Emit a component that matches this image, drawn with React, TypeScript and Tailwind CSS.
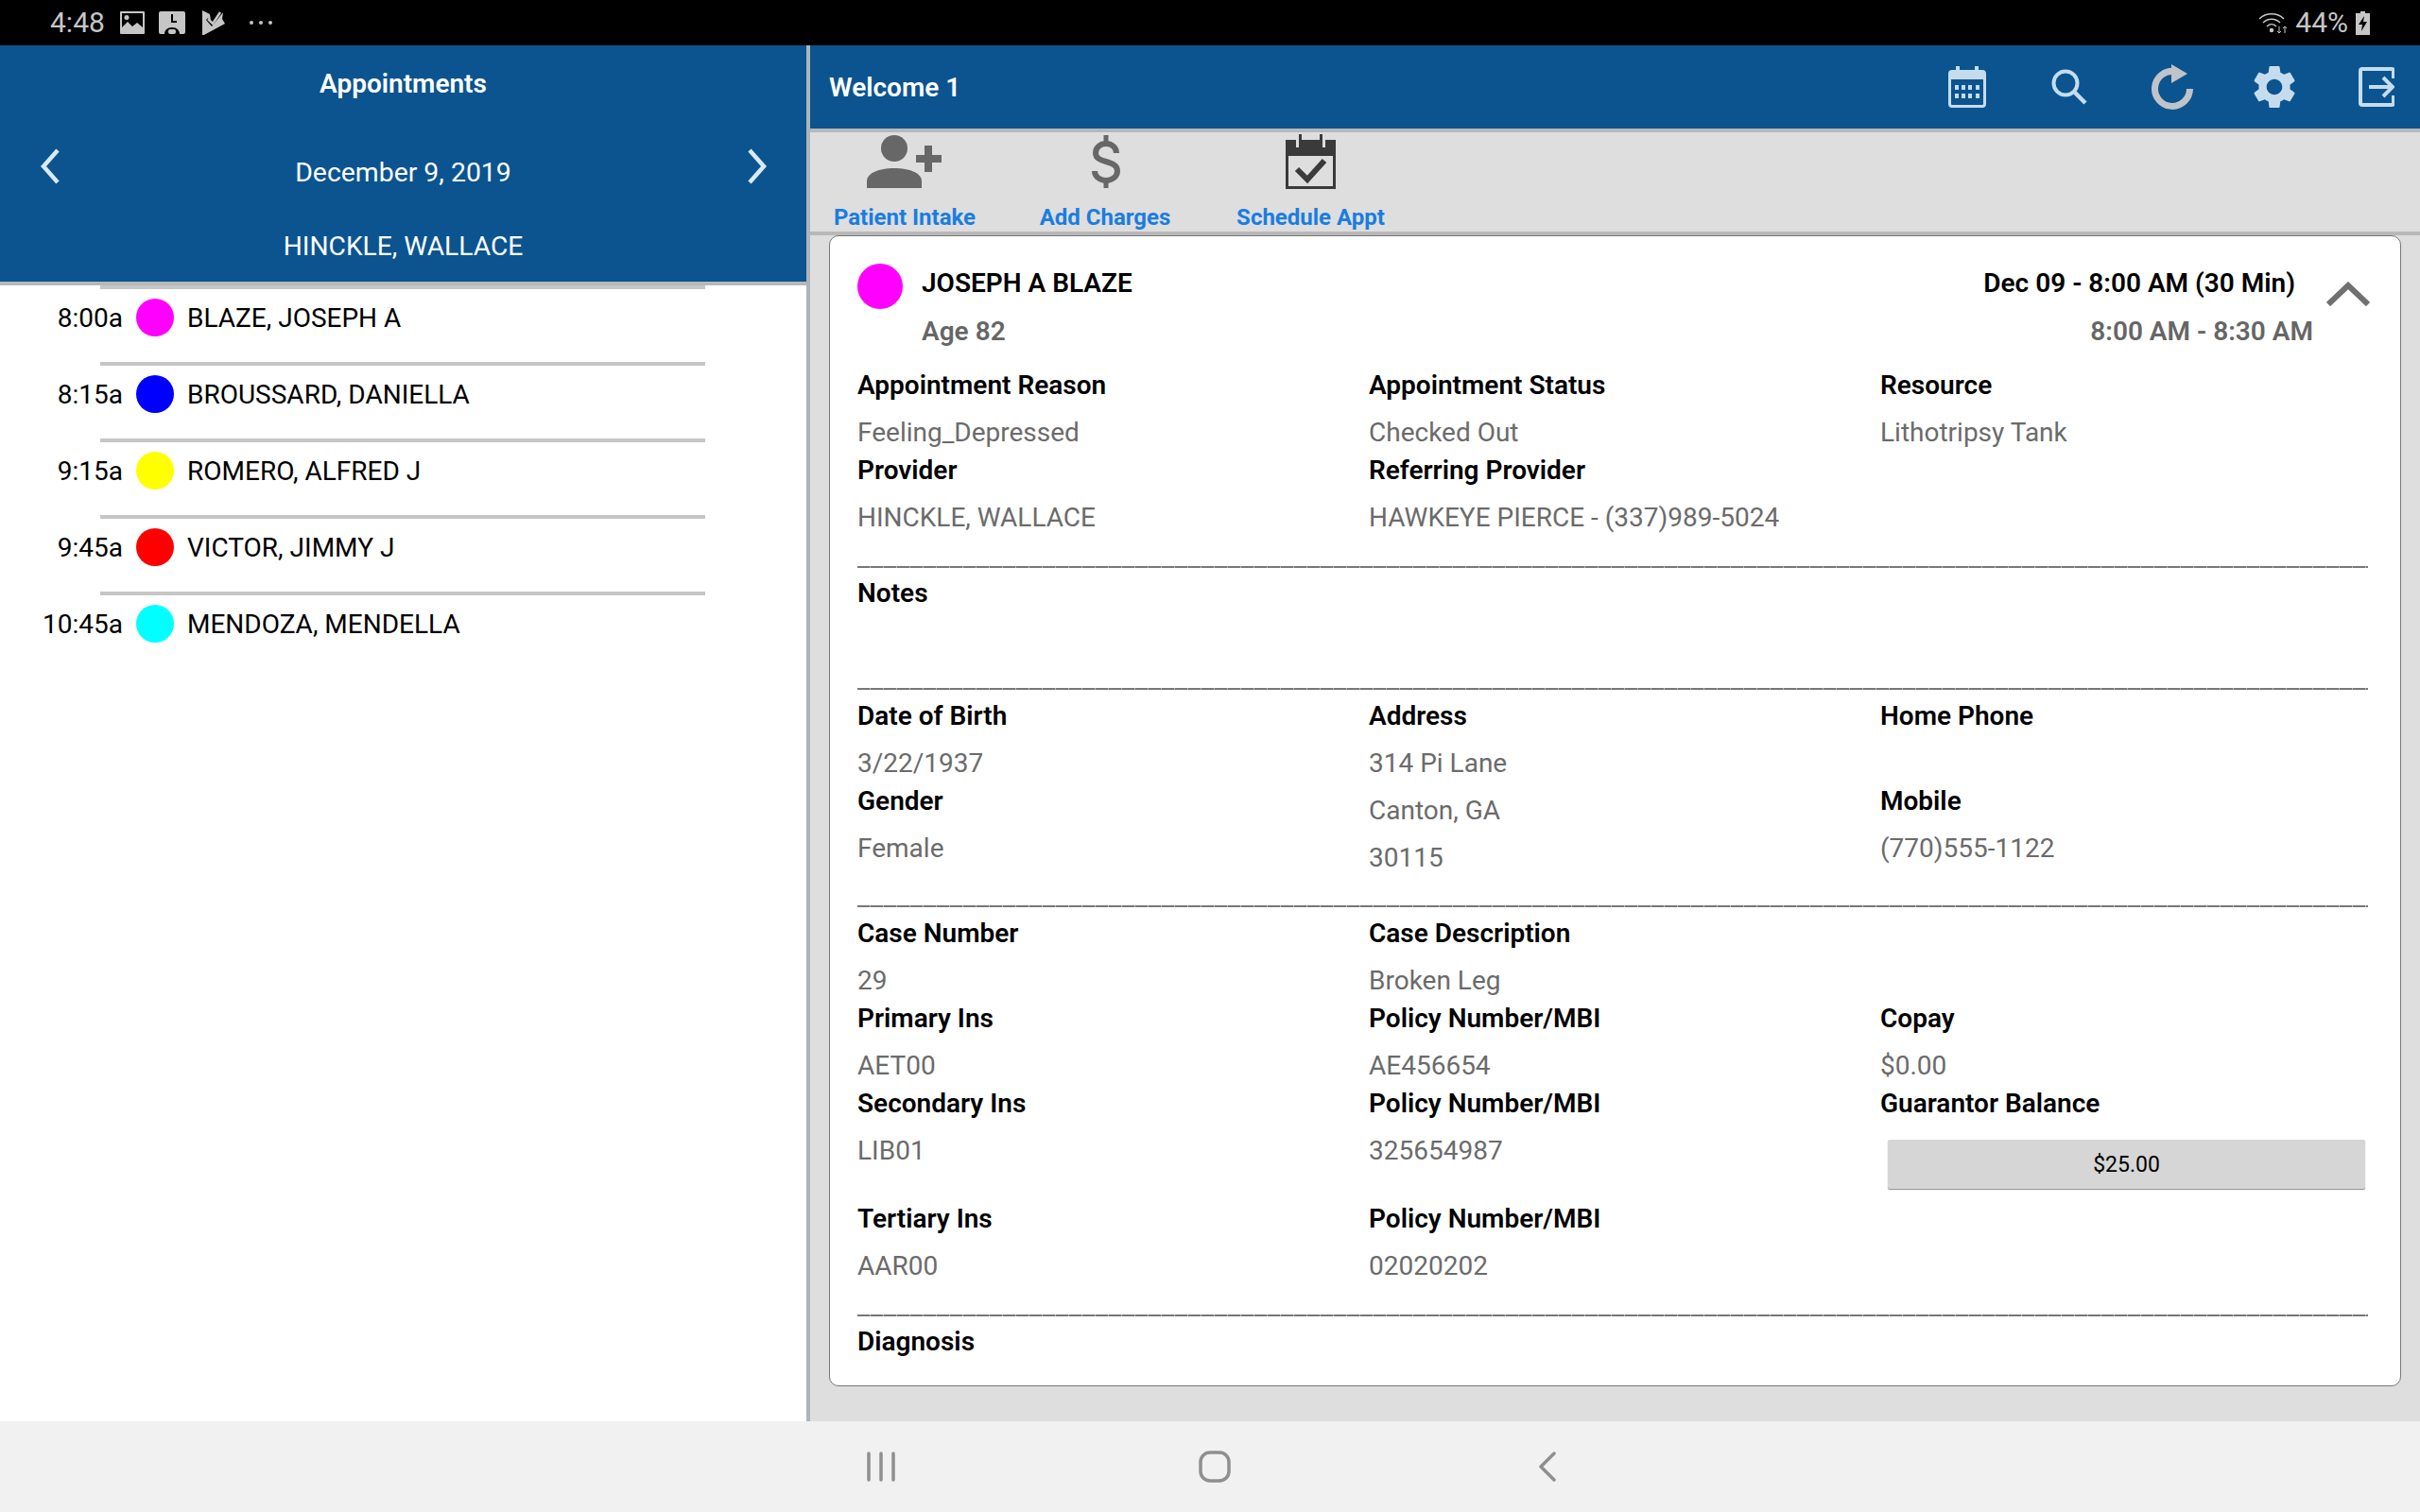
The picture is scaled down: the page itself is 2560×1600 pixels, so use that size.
import type { ReactNode } from "react";

const appointments = [
  { time: "8:00a", color: "bg-[#ff00ff]", name: "BLAZE, JOSEPH A" },
  { time: "8:15a", color: "bg-[#0000ff]", name: "BROUSSARD, DANIELLA" },
  { time: "9:15a", color: "bg-[#ffff00]", name: "ROMERO, ALFRED J" },
  { time: "9:45a", color: "bg-[#ff0000]", name: "VICTOR, JIMMY J" },
  { time: "10:45a", color: "bg-[#00ffff]", name: "MENDOZA, MENDELLA" },
];

function StatusBar() {
  return (
    <div className="flex h-[48px] shrink-0 items-center bg-black pl-[53px] pr-[53px] text-[#c6c6c6]">
      <span className="w-[74px] text-[30px] leading-none">4:48</span>
      <svg className="h-[24px] w-[26px]" viewBox="0 0 26 24">
        <path fill="#c6c6c6" fillRule="evenodd" d="M1 0h24a1 1 0 0 1 1 1v22a1 1 0 0 1-1 1H1a1 1 0 0 1-1-1V1a1 1 0 0 1 1-1zm1 2v15l6-6 5 5 5-4 6 5V2H2zm5 2a2.500 2.500 0 1 1 0 5 2.500 2.500 0 0 1 0-5z" />
      </svg>
      <svg className="ml-[15px] h-[24px] w-[28px]" viewBox="0 0 28 24">
        <path fill="#c6c6c6" fillRule="evenodd" d="M2 0h24a2 2 0 0 1 2 2v20a2 2 0 0 1-2 2h-4c0-4-3-7-8-7s-8 3-8 7H2a2 2 0 0 1-2-2V2a2 2 0 0 1 2-2zm11 3v9h6v-2h-4V3h-2zm-3 18a2 2 0 0 1 2-2h4a2 2 0 0 1 2 2v1a2 2 0 0 1-2 2h-4a2 2 0 0 1-2-2v-1z" />
      </svg>
      <svg className="ml-[18px] h-[26px] w-[24px]" viewBox="0 0 24 26">
        <path fill="#c6c6c6" d="M0 0l8 4 1 7-3-3-2 2 6 7 12-15-1 7 3 5-24 13z" />
        <path fill="none" stroke="#c6c6c6" strokeWidth="2.500" d="M6 9l5 5 8-12" />
      </svg>
      <span className="ml-[26px] flex w-[24px] justify-between">
        <i className="block h-[4px] w-[4px] rounded-full bg-[#c6c6c6]" />
        <i className="block h-[4px] w-[4px] rounded-full bg-[#c6c6c6]" />
        <i className="block h-[4px] w-[4px] rounded-full bg-[#c6c6c6]" />
      </span>
      <div className="ml-auto flex items-center">
        <svg className="h-[24px] w-[31px]" viewBox="0 0 31 24" fill="none" stroke="#c6c6c6" strokeWidth="1.500">
          <path d="M1 8c7-7 19-7 26 0" />
          <path d="M5 12c5-5 13-5 18 0" />
          <path d="M9 16c3-3 7-3 10 0" />
          <circle cx="14" cy="20" r="1.500" fill="#c6c6c6" />
          <path d="M22 16v7M20 21l2 2 2-2M28 23v-7M26 18l2-2 2 2" strokeWidth="1" />
        </svg>
        <span className="ml-[8px] text-[30px] leading-none">44%</span>
        <svg className="ml-[8px] h-[25px] w-[15px]" viewBox="0 0 15 25">
          <path fill="#c6c6c6" d="M5 0h5v2h5v23H0V2h5z" />
          <path fill="#000" d="M9 5L3 14h4l-1 7 6-10H8z" />
        </svg>
      </div>
    </div>
  );
}

function Sidebar() {
  return (
    <div className="flex w-[853px] shrink-0 flex-col bg-white">
      <div className="relative flex h-[250px] shrink-0 flex-col items-center bg-[#0b548f] text-white">
        <div className="mt-[21px] text-[28px] font-semibold leading-[40px]">Appointments</div>
        <div className="mt-[54px] text-[28.4px] leading-[40px]">December 9, 2019</div>
        <div className="mt-[38px] text-[28.2px] leading-[40px]">HINCKLE, WALLACE</div>
        <svg className="absolute left-[42px] top-[109px] h-[38px] w-[22px]" viewBox="0 0 22 38" fill="none" stroke="#dbe9f4" strokeWidth="4.500">
          <path d="M19 2L4 19l15 17" />
        </svg>
        <svg className="absolute left-[790px] top-[109px] h-[38px] w-[22px]" viewBox="0 0 22 38" fill="none" stroke="#dbe9f4" strokeWidth="4.500">
          <path d="M3 2l15 17L3 36" />
        </svg>
      </div>
      <div className="h-[4px] shrink-0 bg-[#b8b8b8]" />
      {appointments.map((a) => (
        <div key={a.name} className="flex h-[81px] shrink-0 flex-col">
          <div className="ml-[106px] h-[4px] w-[640px] shrink-0 bg-[#c6c6c6]" />
          <div className="flex h-[60px] items-center">
            <span className="w-[130px] pt-[2px] text-right text-[28px] leading-none text-black">{a.time}</span>
            <span className={`ml-[14px] h-[40px] w-[40px] rounded-full ${a.color}`} />
            <span className="ml-[14px] pt-[2px] text-[28px] leading-none text-black">{a.name}</span>
          </div>
        </div>
      ))}
    </div>
  );
}

function TopBar() {
  return (
    <div className="flex h-[88px] shrink-0 items-center bg-[#0b548f]">
      <span className="ml-[20px] pt-[2px] text-[28px] font-semibold text-white">Welcome 1</span>
      <div className="ml-auto mr-[27px] flex items-center">
        <svg className="h-[44px] w-[40px]" viewBox="0 0 40 44">
          <path fill="#c5dcee" fillRule="evenodd" d="M8 0h4v4h16V0h4v4h4a4 4 0 0 1 4 4v32a4 4 0 0 1-4 4H4a4 4 0 0 1-4-4V8a4 4 0 0 1 4-4h4V0zM3 14v26a1 1 0 0 0 1 1h32a1 1 0 0 0 1-1V14H3z" />
          {[7, 14, 21, 29].map((x) => (
            <g key={x} fill="#c5dcee">
              <rect x={x} y="20" width="4" height="5" />
              <rect x={x} y="29" width="4" height="5" />
            </g>
          ))}
        </svg>
        <svg className="ml-[69px] h-[38px] w-[38px]" viewBox="0 0 38 38" fill="none" stroke="#c5dcee" strokeWidth="4">
          <circle cx="15" cy="15" r="12.500" />
          <path d="M24 24l12 12" strokeWidth="4.500" />
        </svg>
        <svg className="ml-[68px] h-[48px] w-[44px]" viewBox="0 0 44 48" fill="none">
          <path d="M24 7.500A18.500 18.500 0 1 0 40.500 26" stroke="#c0c4c8" strokeWidth="7" />
          <path d="M21 0l17 10-17 10z" fill="#c0c4c8" />
        </svg>
        <svg className="ml-[63px] h-[46px] w-[46px]" viewBox="2 2 20 20">
          <path fill="#c5dcee" d="M19.140 12.940c.04-.3.06-.61.06-.94 0-.32-.02-.64-.07-.94l2.030-1.580c.18-.14.23-.41.12-.61l-1.920-3.320c-.12-.22-.37-.29-.59-.22l-2.390.96c-.5-.38-1.030-.7-1.620-.94l-.36-2.540c-.04-.24-.24-.41-.48-.41h-3.840c-.24 0-.43.17-.47.41l-.36 2.540c-.59.24-1.130.57-1.620.94l-2.390-.96c-.22-.08-.47 0-.59.22L2.740 8.870c-.12.21-.08.47.12.61l2.030 1.580c-.05.3-.09.63-.09.94s.02.64.07.94l-2.030 1.580c-.18.14-.23.41-.12.61l1.920 3.320c.12.22.37.29.59.22l2.390-.96c.5.38 1.030.7 1.620.94l.36 2.540c.05.24.24.41.48.41h3.840c.24 0 .44-.17.47-.41l.36-2.540c.59-.24 1.130-.56 1.620-.94l2.390.96c.22.08.47 0 .59-.22l1.920-3.320c.12-.22.07-.47-.12-.61l-2.010-1.580zM12 15.600c-1.980 0-3.600-1.620-3.600-3.600s1.620-3.600 3.600-3.600 3.600 1.620 3.600 3.600-1.620 3.600-3.600 3.600z" />
        </svg>
        <svg className="ml-[66px] h-[42px] w-[38px]" viewBox="0 0 38 42" fill="none" stroke="#c5dcee" strokeWidth="4">
          <path d="M37 12V4a2 2 0 0 0-2-2H4a2 2 0 0 0-2 2v34a2 2 0 0 0 2 2h31a2 2 0 0 0 2-2v-8" />
          <path d="M11 21h24M26 11l10 10-10 10" />
        </svg>
      </div>
    </div>
  );
}

function ToolButton({ icon, label, width }: { icon: ReactNode; label: string; width: string }) {
  return (
    <div className={`flex flex-col items-center ${width}`}>
      <div className="flex h-[62px] items-center">{icon}</div>
      <span className="mt-[13px] whitespace-nowrap text-[24px] font-bold leading-[30px] text-[#1a7de0]">{label}</span>
    </div>
  );
}

function Toolbar() {
  return (
    <div className="flex h-[105px] shrink-0 items-start pl-[25px]">
      <ToolButton
        label="Patient Intake"
        width="w-[150px]"
        icon={
          <svg className="h-[56px] w-[80px]" viewBox="0 0 80 56">
            <ellipse cx="29" cy="14" rx="14" ry="14" fill="#676767" />
            <path d="M0 56V49c0-9 13-14 29-14s29 5 29 14v7z" fill="#676767" />
            <path d="M52 21h9V11h8v10h10v8H69v10h-8V29h-9z" fill="#676767" />
          </svg>
        }
      />
      <ToolButton
        label="Add Charges"
        width="ml-[67px] w-[140px]"
        icon={
          <svg className="ml-[2px] h-[56px] w-[30px]" viewBox="0 0 30 56" fill="none" stroke="#676767" strokeWidth="6">
            <path d="M15 0v9M15 47v9" strokeWidth="5" />
            <path d="M26 19c0-6-5-10-11-10S4 13 4 19c0 5 4 7 11 9s12 4 12 10-6 10-12 10S3 44 3 38" />
          </svg>
        }
      />
      <ToolButton
        label="Schedule Appt"
        width="ml-[69px] w-[157px]"
        icon={
          <svg className="h-[58px] w-[53px]" viewBox="0 0 53 58">
            <path fill="#3a3a3a" fillRule="evenodd" d="M0 6h11v8h3V0h3v6h19V0h3v14h3V6h11v52H0V6zm3 17v32h47V23H3z" />
            <path fill="none" stroke="#3a3a3a" strokeWidth="6" d="M12 37l11 11 18-20" />
          </svg>
        }
      />
    </div>
  );
}

function Label({ children }: { children: ReactNode }) {
  return <div className="h-[40px] text-[28px] font-semibold leading-[42px] text-black">{children}</div>;
}

function Value({ children }: { children?: ReactNode }) {
  return <div className="h-[50px] pt-[11px] text-[28px] leading-[40px] text-[#6b6b6b]">{children}</div>;
}

function Field({ label, values, className }: { label: string; values: string[]; className?: string }) {
  return (
    <div className={className}>
      <Label>{label}</Label>
      {values.map((v) => (
        <Value key={v}>{v}</Value>
      ))}
    </div>
  );
}

function Rule() {
  return <div className="h-[2px] w-full bg-[repeating-linear-gradient(90deg,#777_0_13px,#b4b4b4_13px_14px)]" />;
}

function DetailCard() {
  return (
    <div className="mx-[20px] mb-[37px] flex h-[1218px] flex-col rounded-[10px] border border-[#777] bg-white pl-[29px] pr-[34px]">
      <div className="flex h-[137px] shrink-0 items-start justify-between">
        <div className="flex pt-[29px]">
          <span className="h-[48px] w-[48px] rounded-full bg-[#ff00ff]" />
          <div className="ml-[20px] flex flex-col pt-[1px]">
            <span className="text-[28px] font-semibold leading-[40px] text-black">JOSEPH A BLAZE</span>
            <span className="mt-[11px] text-[28px] font-semibold leading-[40px] text-[#666]">Age 82</span>
          </div>
        </div>
        <div className="relative flex flex-col items-end pr-[58px] pt-[30px]">
          <span className="mr-[19px] text-[28px] font-semibold leading-[40px] text-black">Dec 09 - 8:00 AM (30 Min)</span>
          <span className="mt-[11px] text-[28px] font-semibold leading-[40px] text-[#666]">8:00 AM - 8:30 AM</span>
          <svg className="absolute right-[-2px] top-[48px] h-[26px] w-[46px]" viewBox="0 0 46 26" fill="none" stroke="#707070" strokeWidth="6">
            <path d="M2 24L23 4l21 20" />
          </svg>
        </div>
      </div>

      <div className="grid shrink-0 grid-cols-[541px_541px_1fr] grid-rows-[90px_90px]">
        <Field label="Appointment Reason" values={["Feeling_Depressed"]} />
        <Field label="Appointment Status" values={["Checked Out"]} />
        <Field label="Resource" values={["Lithotripsy Tank"]} />
        <Field label="Provider" values={["HINCKLE, WALLACE"]} />
        <Field label="Referring Provider" values={["HAWKEYE PIERCE - (337)989-5024"]} />
      </div>

      <div className="mt-[32px] shrink-0"><Rule /></div>
      <div className="mt-[6px] h-[120px] shrink-0"><Label>Notes</Label></div>
      <div className="mt-[1px]"><Rule /></div>

      <div className="mt-[7px] grid shrink-0 grid-cols-[541px_541px_1fr] grid-rows-[90px_90px]">
        <Field label="Date of Birth" values={["3/22/1937"]} />
        <Field label="Address" values={["314 Pi Lane", "Canton, GA", "30115"]} className="row-span-2" />
        <Field label="Home Phone" values={[]} />
        <Field label="Gender" values={["Female"]} />
        <Field label="Mobile" values={["(770)555-1122"]} />
      </div>

      <div className="mt-[41px] shrink-0"><Rule /></div>

      <div className="mt-[7px] grid shrink-0 grid-cols-[541px_541px_1fr] grid-rows-[90px_90px_122px_90px]">
        <Field label="Case Number" values={["29"]} />
        <Field label="Case Description" values={["Broken Leg"]} className="col-span-2" />
        <Field label="Primary Ins" values={["AET00"]} />
        <Field label="Policy Number/MBI" values={["AE456654"]} />
        <Field label="Copay" values={["$0.00"]} />
        <Field label="Secondary Ins" values={["LIB01"]} />
        <Field label="Policy Number/MBI" values={["325654987"]} />
        <div>
          <Label>Guarantor Balance</Label>
          <button className="ml-[8px] mt-[19px] flex h-[52px] w-[505px] items-center justify-center rounded-[2px] bg-[#d6d6d6] pt-[2px] text-[23px] text-black shadow-[0_1px_1px_#8a8a8a]">
            $25.00
          </button>
        </div>
        <Field label="Tertiary Ins" values={["AAR00"]} />
        <Field label="Policy Number/MBI" values={["02020202"]} />
      </div>

      <div className="mt-[32px] shrink-0"><Rule /></div>
      <div className="mt-[6px]"><Label>Diagnosis</Label></div>
    </div>
  );
}

function NavBar() {
  return (
    <div className="flex h-[96px] shrink-0 items-center bg-[#f1f1f1]">
      <svg className="ml-[917px] h-[32px] w-[30px]" viewBox="0 0 30 32" fill="none" stroke="#8f8f8f" strokeWidth="3.500" strokeLinecap="round">
        <path d="M2 2v28M15 2v28M28 2v28" />
      </svg>
      <svg className="ml-[321px] h-[34px] w-[34px]" viewBox="0 0 34 34" fill="none" stroke="#8f8f8f" strokeWidth="3.500">
        <rect x="2" y="2" width="30" height="30" rx="10" />
      </svg>
      <svg className="ml-[325px] h-[32px] w-[20px]" viewBox="0 0 20 32" fill="none" stroke="#8f8f8f" strokeWidth="3.500" strokeLinecap="round" strokeLinejoin="round">
        <path d="M17 2L3 16l14 14" />
      </svg>
    </div>
  );
}

export default function App() {
  return (
    <div className="flex h-[1600px] w-[2560px] flex-col overflow-hidden font-['Roboto',sans-serif]">
      <StatusBar />
      <div className="flex min-h-0 flex-1">
        <Sidebar />
        <div className="w-[4px] shrink-0 bg-[#aeb4ba]" />
        <div className="flex min-w-0 flex-1 flex-col bg-[#dedede]">
          <TopBar />
          <div className="h-[4px] shrink-0 bg-[#b8b8b8]" />
          <Toolbar />
          <div className="h-[4px] shrink-0 bg-[#b8b8b8]" />
          <DetailCard />
        </div>
      </div>
      <NavBar />
    </div>
  );
}
